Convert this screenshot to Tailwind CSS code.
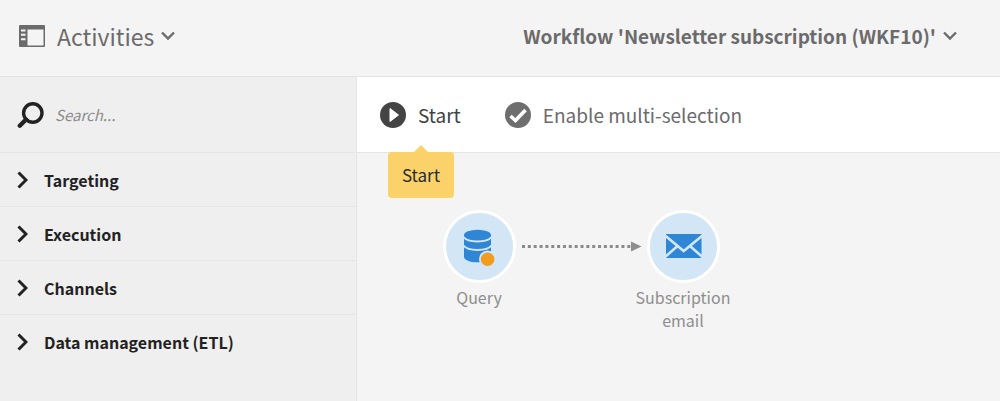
<!DOCTYPE html>
<html lang="en">
<head>
<meta charset="utf-8">
<meta name="viewport" content="width=device-width, initial-scale=1">
<title>Workflow</title>
<script src="https://cdn.jsdelivr.net/npm/@tailwindcss/browser@4"></script>
</head>
<body class="flex min-h-screen flex-col bg-[#f4f4f4] font-['Noto_Sans_CJK_SC','Noto_Sans',sans-serif] text-[#6b6b6b]">
<header class="flex h-[77px] items-center justify-between border-b border-[#e4e4e4] pr-[43px] pb-1 pl-[19px]">
  <button type="button" class="flex items-center text-[23px] leading-8">
    <svg class="mr-3 h-[22px] w-[26px]" viewBox="0 0 26 22" aria-hidden="true">
      <rect width="26" height="22" rx="1" fill="#6b6b6b"/>
      <path d="M8.500 4.500H24.500V20.500H8.500Z" fill="#f4f4f4"/>
      <path d="M2 5.500H6.500M2 9.800H6.500M2 14.200H6.500" stroke="#f4f4f4" stroke-width="2"/>
    </svg>
    <span>Activities</span>
    <svg class="ml-[7px] h-[10px] w-[14px]" viewBox="0 0 14 10" fill="none" stroke="#6b6b6b" stroke-width="2.400" aria-hidden="true"><path d="M1 1.500L7 7.500L13 1.500"/></svg>
  </button>
  <button type="button" class="flex items-center text-[19px] leading-6 font-bold">
    <span>Workflow 'Newsletter subscription (WKF10)'</span>
    <svg class="ml-[7px] h-[10px] w-[14px]" viewBox="0 0 14 10" fill="none" stroke="#6b6b6b" stroke-width="2.400" aria-hidden="true"><path d="M1 1.500L7 7.500L13 1.500"/></svg>
  </button>
</header>
<div class="flex flex-1">
  <aside class="w-[357px] shrink-0 border-r border-[#e6e6e6] bg-[#efefef]">
    <label class="flex h-[75px] items-center pl-[17px]">
      <svg class="h-7 w-7 shrink-0" viewBox="0 0 28 28" fill="none" stroke="#222" aria-label="Search">
        <circle cx="15.800" cy="12" r="9.200" stroke-width="3.400"/>
        <path d="M9 18.500L2.800 24.700" stroke-width="4.400" stroke-linecap="round"/>
      </svg>
      <input type="text" placeholder="Search..." class="ml-[10px] w-full min-w-0 bg-transparent text-[15px] leading-6 italic outline-none placeholder:text-[#8c8c8c]">
    </label>
    <nav class="text-[16px] leading-6 font-bold text-[#222]">
      <button type="button" class="flex h-[54px] w-full items-center border-t border-[#e6e6e6] pl-[17px]">
        <svg class="mr-4 h-[18px] w-[11px]" viewBox="0 0 11 18" fill="none" stroke="#222" stroke-width="3" aria-hidden="true"><path d="M1.500 1.500L9 9L1.500 16.500"/></svg>Targeting</button>
      <button type="button" class="flex h-[54px] w-full items-center border-t border-[#e6e6e6] pl-[17px]">
        <svg class="mr-4 h-[18px] w-[11px]" viewBox="0 0 11 18" fill="none" stroke="#222" stroke-width="3" aria-hidden="true"><path d="M1.500 1.500L9 9L1.500 16.500"/></svg>Execution</button>
      <button type="button" class="flex h-[54px] w-full items-center border-t border-[#e6e6e6] pl-[17px]">
        <svg class="mr-4 h-[18px] w-[11px]" viewBox="0 0 11 18" fill="none" stroke="#222" stroke-width="3" aria-hidden="true"><path d="M1.500 1.500L9 9L1.500 16.500"/></svg>Channels</button>
      <button type="button" class="flex h-[54px] w-full items-center border-t border-[#e6e6e6] pl-[17px]">
        <svg class="mr-4 h-[18px] w-[11px]" viewBox="0 0 11 18" fill="none" stroke="#222" stroke-width="3" aria-hidden="true"><path d="M1.500 1.500L9 9L1.500 16.500"/></svg>Data management (ETL)</button>
    </nav>
  </aside>
  <main class="flex min-w-0 flex-1 flex-col">
    <div class="flex h-[76px] items-center gap-[44px] border-b border-[#e4e4e4] bg-white pl-[23px] text-[19px] leading-7">
      <button type="button" class="relative flex items-center text-[#424242]" aria-describedby="tip">
        <svg class="mr-3 h-[26px] w-[26px]" viewBox="0 0 26 26" aria-hidden="true"><circle cx="13" cy="13" r="13" fill="#444"/><path d="M10 6.500L18.500 13L10 19.500Z" fill="#fff" stroke="#fff" stroke-linejoin="round"/></svg>
        <span>Start</span>
        <span id="tip" role="tooltip" class="absolute top-[51px] left-2 flex h-[46px] w-[66px] items-center justify-center rounded bg-[#fad269] text-[17px] text-[#2b2b2b]">Start
          <svg class="absolute -top-[7px] left-[25px] h-2 w-4" viewBox="0 0 16 8" aria-hidden="true"><path d="M0 8L8 0L16 8Z" fill="#fad269"/></svg>
        </span>
      </button>
      <button type="button" class="flex items-center">
        <svg class="mr-3 h-[26px] w-[26px]" viewBox="0 0 26 26" aria-hidden="true"><circle cx="13" cy="13" r="13" fill="#6e6e6e"/><path d="M5.500 14L10.500 18.500L20.500 8" fill="none" stroke="#fff" stroke-width="3.600"/></svg>
        <span>Enable multi-selection</span>
      </button>
    </div>
    <section class="relative flex-1 text-[16px] leading-[23px] text-[#8e8e8e]" aria-label="Workflow canvas">
      <div class="absolute top-[57px] left-[62px] flex w-[120px] flex-col items-center text-center">
        <svg class="mb-[3px] h-[73px] w-[73px]" viewBox="0 0 73 73" aria-hidden="true">
          <circle cx="36.500" cy="36.500" r="35" fill="#d3e6f6" stroke="#fff" stroke-width="3"/>
          <path d="M21 25V47C21 50 27 52.300 34.500 52.300S48 50 48 47V25Z" fill="#2f86d4"/>
          <ellipse cx="34.500" cy="25" rx="13.500" ry="5.200" fill="#2f86d4"/>
          <path d="M20.500 27C23 30.300 28 31.500 34.500 31.500S46 30.300 48.500 27M20.500 35.500C23 38.800 28 40 34.500 40S46 38.800 48.500 35.500" fill="none" stroke="#d3e6f6" stroke-width="1.900"/>
          <circle cx="44.600" cy="49.200" r="7.700" fill="#f29c1f" stroke="#d3e6f6" stroke-width="1.800"/>
        </svg>
        <span>Query</span>
      </div>
      <svg class="absolute top-[88px] left-[164px] h-[11px] w-[121px]" viewBox="0 0 121 11" aria-hidden="true"><path d="M1 5.500H110" stroke="#8a8a8a" stroke-width="3" stroke-dasharray="3 2.850"/><path d="M110 0.500L120.500 5.500L110 10.500Z" fill="#8e8e8e"/></svg>
      <div class="absolute top-[57px] left-[266px] flex w-[120px] flex-col items-center text-center">
        <svg class="mb-[3px] h-[73px] w-[73px]" viewBox="0 0 73 73" aria-hidden="true">
          <circle cx="36.500" cy="36.500" r="35" fill="#d3e6f6" stroke="#fff" stroke-width="3"/>
          <path d="M19 24H54.500V48H19Z" fill="#2f86d4"/>
          <path d="M18 25.500L36.700 41L55.500 25.500M18 47L30 36.500M55.500 47L43.500 36.500" fill="none" stroke="#d3e6f6" stroke-width="2.600"/>
        </svg>
        <span>Subscription<br>email</span>
      </div>
    </section>
  </main>
</div>
</body>
</html>
